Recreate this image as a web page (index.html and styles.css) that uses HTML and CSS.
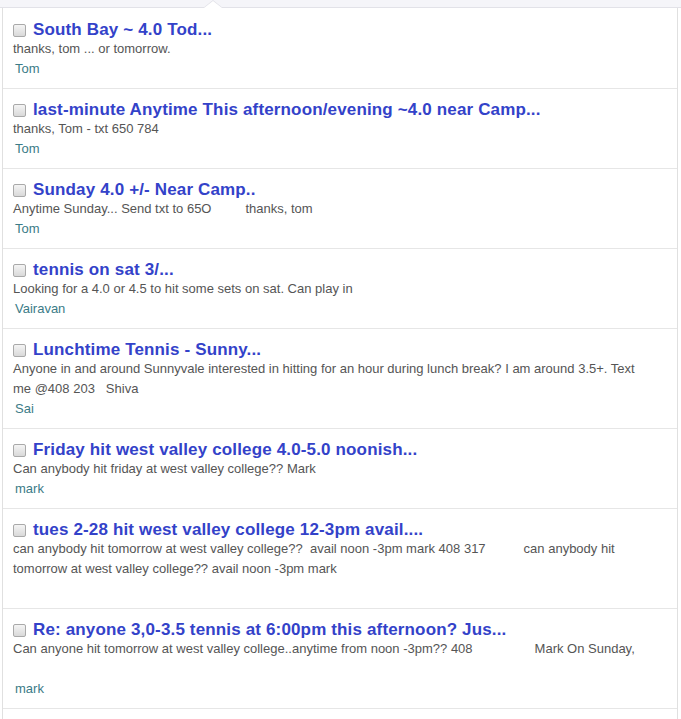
FILE: index.html
```html
<!DOCTYPE html>
<html>
<head>
<meta charset="utf-8">
<link rel="stylesheet" href="styles.css">
</head>
<body>
<div class="topbar"><span class="caret"></span></div>
<div class="panel">
  <div class="item">
    <div class="title"><input type="checkbox" class="cb"><a class="subj">South Bay ~ 4.0 Tod...</a></div>
    <div class="body">thanks, tom ... or tomorrow.</div>
    <div class="author">Tom</div>
  </div>
  <div class="item">
    <div class="title"><input type="checkbox" class="cb"><a class="subj">last-minute Anytime This afternoon/evening ~4.0 near Camp...</a></div>
    <div class="body">thanks, Tom - txt 650 784</div>
    <div class="author">Tom</div>
  </div>
  <div class="item">
    <div class="title"><input type="checkbox" class="cb"><a class="subj">Sunday 4.0 +/- Near Camp..</a></div>
    <div class="body">Anytime Sunday... Send txt to 65O<span class="gap g1"></span>thanks, tom</div>
    <div class="author">Tom</div>
  </div>
  <div class="item">
    <div class="title"><input type="checkbox" class="cb"><a class="subj">tennis on sat 3/...</a></div>
    <div class="body">Looking for a 4.0 or 4.5 to hit some sets on sat. Can play in</div>
    <div class="author">Vairavan</div>
  </div>
  <div class="item">
    <div class="title"><input type="checkbox" class="cb"><a class="subj">Lunchtime Tennis - Sunny...</a></div>
    <div class="body">Anyone in and around Sunnyvale interested in hitting for an hour during lunch break? I am around 3.5+. Text me @408 203<span class="gap g2"></span>Shiva</div>
    <div class="author">Sai</div>
  </div>
  <div class="item">
    <div class="title"><input type="checkbox" class="cb"><a class="subj">Friday hit west valley college 4.0-5.0 noonish...</a></div>
    <div class="body">Can anybody hit friday at west valley college?? Mark</div>
    <div class="author">mark</div>
  </div>
  <div class="item">
    <div class="title"><input type="checkbox" class="cb"><a class="subj">tues 2-28 hit west valley college 12-3pm avail....</a></div>
    <div class="body">can anybody hit tomorrow at west valley college??&nbsp; avail noon -3pm mark 408 317<span class="gap g3"></span>can anybody hit tomorrow at west valley college?? avail noon -3pm mark</div>
    <div class="author">&nbsp;</div>
  </div>
  <div class="item">
    <div class="title"><input type="checkbox" class="cb"><a class="subj">Re: anyone 3,0-3.5 tennis at 6:00pm this afternoon? Jus...</a></div>
    <div class="body">Can anyone hit tomorrow at west valley college..anytime from noon -3pm?? 408<span class="gap g4"></span>Mark On Sunday,<br>&nbsp;</div>
    <div class="author">mark</div>
  </div>
  <div class="item">
    <div class="title"><input type="checkbox" class="cb"><a class="subj">&nbsp;</a></div>
  </div>
</div>
</body>
</html>
```
FILE: styles.css
```css
html, body {
  margin: 0;
  padding: 0;
  background: #ffffff;
  font-family: "Liberation Sans", Arial, sans-serif;
  overflow: hidden;
}
.topbar {
  position: relative;
  height: 7px;
  background: #f5f5f9;
  border-bottom: 1px solid #e2e2e8;
}
.caret {
  position: absolute;
  left: 203px;
  top: 0;
  width: 0;
  height: 0;
  border-left: 10px solid transparent;
  border-right: 10px solid transparent;
  border-bottom: 8px solid #e2e2e8;
}
.caret::after {
  content: "";
  position: absolute;
  left: -9px;
  top: 1px;
  border-left: 9px solid transparent;
  border-right: 9px solid transparent;
  border-bottom: 7px solid #ffffff;
}
.panel {
  margin-left: 2px;
  width: 674px;
  border-left: 1px solid #e0e0e0;
  border-right: 1px solid #e0e0e0;
}
.item {
  padding: 10px 31px 9px 10px;
  border-bottom: 1px solid #e6e6e6;
}
.item:first-child {
  padding-top: 11px;
}
.title {
  display: flex;
  align-items: center;
  box-sizing: border-box;
  height: 20px;
  padding-top: 2px;
}
.cb {
  appearance: none;
  -webkit-appearance: none;
  box-sizing: border-box;
  width: 13px;
  height: 13px;
  margin: 0 7px 0 0;
  flex: none;
  border: 1px solid #a9a9a9;
  border-radius: 2px;
  background: linear-gradient(#f4f4f4, #d9d9d9);
}
.subj {
  font-size: 17px;
  font-weight: bold;
  color: #3342c9;
  white-space: nowrap;
  letter-spacing: 0.15px;
}
.body {
  font-size: 13px;
  line-height: 20px;
  color: #555555;
}
.gap {
  display: inline-block;
}
.g1 { width: 34px; }
.g2 { width: 11px; }
.g3 { width: 38px; }
.g4 { width: 62px; }
.author {
  font-size: 13px;
  line-height: 20px;
  color: #3b7b87;
  padding-left: 2px;
}
```
